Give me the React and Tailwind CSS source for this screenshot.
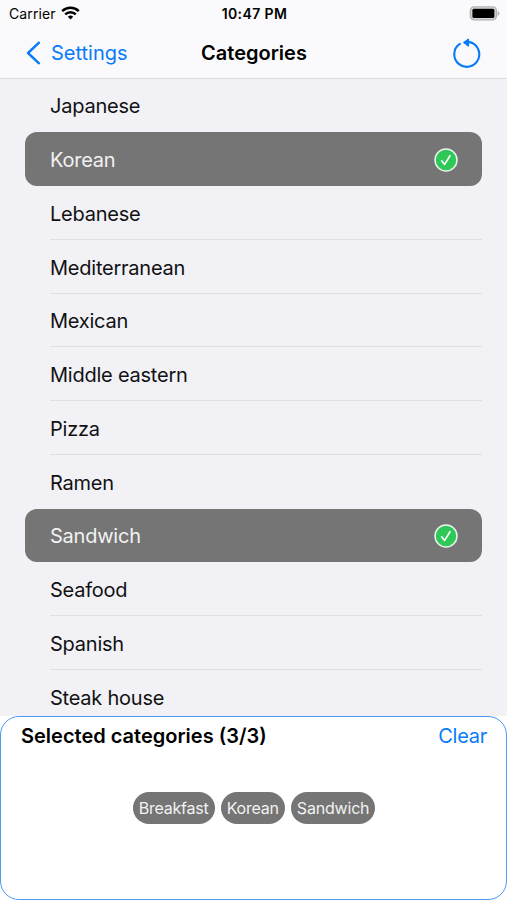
import { useState } from 'react';

const CATEGORIES = [
    'Japanese',
    'Korean',
    'Lebanese',
    'Mediterranean',
    'Mexican',
    'Middle eastern',
    'Pizza',
    'Ramen',
    'Sandwich',
    'Seafood',
    'Spanish',
    'Steak house',
];

const MAX_SELECTED = 3;

const StatusBar = () => (
    <div className="grid h-[27px] grid-cols-3 items-center pl-[9px] pr-[7px] text-[14px] leading-none">
        <div className="flex items-center gap-[5px] tracking-[0.1px]">
            <span>Carrier</span>
            <svg className="mb-px h-[14px] w-[19px]" viewBox="0 0 19 14" fill="none" stroke="black" strokeWidth="2.4">
                <path d="M1.2 5.2a11.8 11.8 0 0 1 16.6 0" />
                <path d="M4.2 8.4a7.5 7.5 0 0 1 10.6 0" />
                <path d="M9.5 13.5 6.8 10.8a3.9 3.9 0 0 1 5.4 0Z" fill="black" stroke="none" />
            </svg>
        </div>
        <span className="whitespace-nowrap text-center font-semibold tracking-[0.4px]">10:47 PM</span>
        <svg className="h-[15px] w-[31px] justify-self-end" viewBox="0 0 31 15">
            <rect x="1.4" y="0.9" width="26" height="13" rx="3.8" fill="#d9d9db" stroke="#b1b1b3" strokeWidth="1.4" />
            <rect x="3.4" y="2.8" width="22" height="9.2" rx="1.5" fill="black" />
            <path d="M28.6 5c2.5.8 2.5 4 0 4.8Z" fill="#b1b1b3" />
        </svg>
    </div>
);

const CheckBadge = () => (
    <svg className="size-6" viewBox="0 0 24 24" fill="none">
        <circle cx="12" cy="12" r="11" fill="#30c759" stroke="#e9f5ec" strokeWidth="1.5" />
        <path d="m7.6 12.8 3 3.6 5.4-8.6" stroke="white" strokeWidth="1.6" strokeLinecap="round" strokeLinejoin="round" />
    </svg>
);

const CategoryRow = ({ name, selected, divider, onClick }) => (
    <li
        onClick={onClick}
        className={`flex h-[53.75px] shrink-0 items-stretch rounded-xl pl-[25px] ${selected ? 'bg-[#757575] text-[#f2f2f2]' : 'text-[#111113]'}`}
    >
        <div className={`flex flex-1 items-center justify-between border-b pt-[2.8px] pr-6 ${divider ? 'border-[#dedee3]' : 'border-transparent'}`}>
            <span>{name}</span>
            {selected && <CheckBadge />}
        </div>
    </li>
);

const App = () => {
    const [selected, setSelected] = useState(['Breakfast', 'Korean', 'Sandwich']);

    const toggle = (name) => {
        if (selected.includes(name)) {
            setSelected(selected.filter((item) => item !== name));
        } else if (selected.length < MAX_SELECTED) {
            setSelected([...selected, name]);
        }
    };

    return (
        <div className="flex h-[900px] w-[507px] flex-col overflow-hidden bg-[#f1f1f6] font-['Inter',sans-serif] text-black">
            <header className="h-[78.6px] shrink-0 border-b border-[#dcdce0] bg-[#fafafc]">
                <StatusBar />
                <div className="grid h-[51px] grid-cols-3 items-center pl-[26px] pr-[26px] text-[20px]">
                    <button className="flex items-center gap-[10px] text-[#087bf8]">
                        <svg className="h-6 w-[15px]" viewBox="0 0 15 24" fill="none" stroke="currentColor" strokeWidth="2.4" strokeLinecap="round" strokeLinejoin="round">
                            <path d="M13 1.7 2 12l11 10.3" />
                        </svg>
                        Settings
                    </button>
                    <h1 className="pl-px text-center font-semibold">Categories</h1>
                    <button className="justify-self-end text-[#087bf8]">
                        <svg className="h-[30px] w-7" viewBox="0 0 28 30" fill="none" stroke="currentColor" strokeWidth="2.1" strokeLinecap="round">
                            <path d="M6.8 5.9A12.5 12.5 0 1 0 15.5 3.9" />
                            <path d="M10.8 4.5 15.4 1.3v6.6Z" fill="currentColor" strokeWidth="1.4" strokeLinejoin="round" />
                        </svg>
                    </button>
                </div>
            </header>

            <ul className="flex min-h-0 flex-1 flex-col overflow-hidden px-[25px] text-[20px] tracking-[-0.23px]">
                {CATEGORIES.map((name, i) => (
                    <CategoryRow
                        key={name}
                        name={name}
                        selected={selected.includes(name)}
                        divider={!selected.includes(name) && !selected.includes(CATEGORIES[i + 1])}
                        onClick={() => toggle(name)}
                    />
                ))}
            </ul>

            <div className="h-[184px] shrink-0 bg-white">
                <section className="flex h-full flex-col rounded-[19px] border border-[#4a9af5]">
                    <div className="flex h-[38px] items-center justify-between pl-5 pr-[19px] text-[20px]">
                        <h2 className="font-semibold">Selected categories ({selected.length}/{MAX_SELECTED})</h2>
                        <button onClick={() => setSelected([])} className="tracking-[-0.25px] text-[#087bf8]">Clear</button>
                    </div>
                    <div className="mt-[37px] flex justify-center gap-[6px] pl-px text-[16px] tracking-[-0.2px] text-[#f2f2f2]">
                        {selected.map((name) => (
                            <span key={name} className="flex h-8 items-center rounded-full bg-[#757575] px-[6px]">{name}</span>
                        ))}
                    </div>
                </section>
            </div>
        </div>
    );
};

export default App;
